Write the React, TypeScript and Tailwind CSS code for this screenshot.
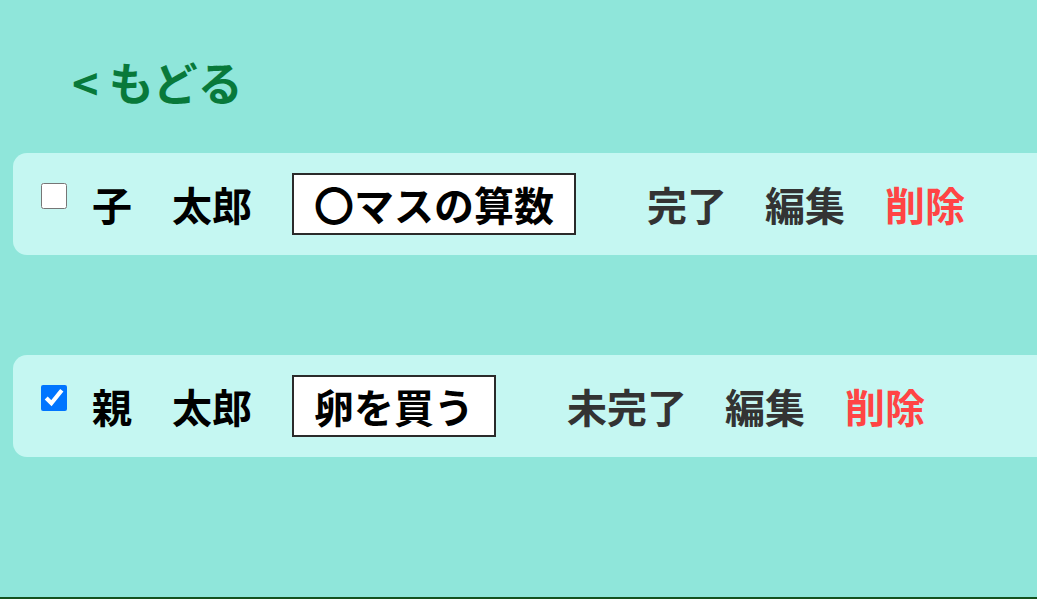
import React from 'react';

type Todo = {
  id: number;
  owner: string;
  title: string;
  done: boolean;
};

const todos: Todo[] = [
  { id: 1, owner: '子　太郎', title: '〇マスの算数', done: false },
  { id: 2, owner: '親　太郎', title: '卵を買う', done: true },
];

export default function App() {
  return (
    <div
      className="h-[599px] overflow-hidden bg-[#8fe6da] border-b-2 border-[#13521f]"
      style={{ fontFamily: '"Noto Sans CJK JP", "Noto Sans", sans-serif' }}
    >
      {/* Back link */}
      <div className="pl-[72px] pt-[50px] h-[153px]">
        <a href="#" className="text-[45px] leading-[64px] font-bold text-[#08793a]">
          &lt; もどる
        </a>
      </div>

      {/* Todo list */}
      <div className="flex flex-col gap-[100px]">
        {todos.map((todo) => (
          <TodoRow key={todo.id} todo={todo} />
        ))}
      </div>
    </div>
  );
}

function TodoRow({ todo }: { todo: Todo }) {
  return (
    <div className="ml-[13px] w-[1060px] rounded-[14px] bg-[#c5f7f2] py-[20px] pl-[28px] flex items-center">
      <input
        type="checkbox"
        defaultChecked={todo.done}
        className="w-[26px] h-[26px] m-0 accent-[#0075ff] self-start mt-[10px]"
      />
      <span className="ml-[25px] text-[40px] font-bold text-black leading-[58px]">{todo.owner}</span>
      <span className="ml-[40px] border-2 border-[#2b2b2b] bg-white px-[20px] text-[40px] font-bold text-black leading-[58px]">
        {todo.title}
      </span>
      <div className="ml-[71px] flex items-center gap-[40px] text-[40px] font-bold leading-[58px]">
        <button className="text-[#333333]">{todo.done ? '未完了' : '完了'}</button>
        <button className="text-[#333333] -ml-[2px]">編集</button>
        <button className="text-[#ff4444]">削除</button>
      </div>
    </div>
  );
}
